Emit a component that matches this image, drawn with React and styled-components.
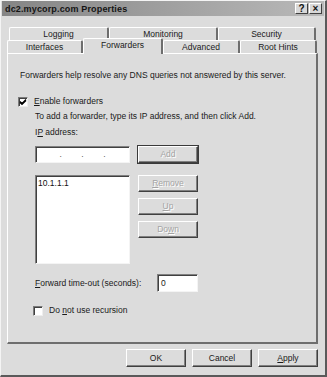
import React from "react";
import styled, { createGlobalStyle } from "styled-components";

const Global = createGlobalStyle`
  html, body {
    margin: 0;
    padding: 0;
    background: #dcdcdc;
  }
  * {
    box-sizing: border-box;
  }
`;

const row1 = [
  { label: "Logging", w: 100 },
  { label: "Monitoring", w: 109 },
  { label: "Security", w: 98 },
];

const row2 = [
  { label: "Interfaces", w: 76 },
  { label: "Forwarders", w: 80, active: true },
  { label: "Advanced", w: 77 },
  { label: "Root Hints", w: 77 },
];

const App = () => {
  return (
    <>
      <Global />
      <Window>
        <TitleBar>
          <Title>dc2.mycorp.com Properties</Title>
          <CaptionButtons>
            <CaptionButton>?</CaptionButton>
            <CaptionButton>×</CaptionButton>
          </CaptionButtons>
        </TitleBar>
        <Body>
          <TabStrip>
            <TabRow $indent={2}>
              {row1.map((t) => (
                <Tab key={t.label} $w={t.w}>
                  {t.label}
                </Tab>
              ))}
            </TabRow>
            <TabRow $indent={0}>
              {row2.map((t) => (
                <Tab key={t.label} $w={t.w} $active={t.active}>
                  {t.label}
                </Tab>
              ))}
            </TabRow>
          </TabStrip>
          <Panel>
            <Text>
              Forwarders help resolve any DNS queries not answered by this
              server.
            </Text>
            <CheckRow $top={15}>
              <Check>
                <svg width="8" height="8" viewBox="0 0 8 8">
                  <path
                    d="M1 3.5 L3 5.5 L7 1.5 M1 4.5 L3 6.5 L7 2.5"
                    stroke="#000"
                    strokeWidth="1.2"
                    fill="none"
                  />
                </svg>
              </Check>
              <span>
                <U>E</U>nable forwarders
              </span>
            </CheckRow>
            <Group>
              <Text $top={4}>
                To add a forwarder, type its IP address, and then click Add.
              </Text>
              <Text $top={5}>
                I<U>P</U> address:
              </Text>
              <FieldRow $top={8}>
                <IpField>
                  <IpSeg />
                  <IpDot>.</IpDot>
                  <IpSeg />
                  <IpDot>.</IpDot>
                  <IpSeg />
                  <IpDot>.</IpDot>
                  <IpSeg />
                </IpField>
                <Button $disabled $default>
                  Add
                </Button>
              </FieldRow>
              <FieldRow $top={12}>
                <ListBox>
                  <ListItem>10.1.1.1</ListItem>
                </ListBox>
                <ButtonColumn>
                  <Button $disabled>
                    <U>R</U>emove
                  </Button>
                  <Button $disabled>
                    <U>U</U>p
                  </Button>
                  <Button $disabled>
                    Do<U>w</U>n
                  </Button>
                </ButtonColumn>
              </FieldRow>
              <TimeoutRow>
                <span>
                  <U>F</U>orward time-out (seconds):
                </span>
                <NumberField>0</NumberField>
              </TimeoutRow>
              <CheckRow $top={13}>
                <Check />
                <span>
                  Do <U>n</U>ot use recursion
                </span>
              </CheckRow>
            </Group>
          </Panel>
          <Footer>
            <Button>OK</Button>
            <Button>Cancel</Button>
            <Button>
              <U>A</U>pply
            </Button>
          </Footer>
        </Body>
      </Window>
    </>
  );
};

export default App;

const Window = styled.div`
  width: 327px;
  height: 377px;
  display: flex;
  flex-direction: column;
  background: #dcdcdc;
  border-left: 1px solid #f4f4f4;
  border-top: 1px solid #f4f4f4;
  border-right: 2px solid #5a5a5a;
  border-bottom: 2px solid #5a5a5a;
  font-family: "Liberation Sans", Arial, sans-serif;
  font-size: 8.5px;
  color: #1a1a1a;
`;

const TitleBar = styled.div`
  height: 15px;
  margin: 0 1px;
  display: flex;
  align-items: center;
  justify-content: space-between;
  padding: 0 2px 0 3px;
  background: linear-gradient(to right, #858585, #b9b9b9);
`;

const Title = styled.div`
  font-weight: bold;
  font-size: 9px;
  color: #141414;
  letter-spacing: 0.15px;
`;

const CaptionButtons = styled.div`
  display: flex;
  gap: 1px;
`;

const CaptionButton = styled.div`
  width: 13px;
  height: 11px;
  display: flex;
  align-items: center;
  justify-content: center;
  background: #d8d8d8;
  border-top: 1px solid #fff;
  border-left: 1px solid #fff;
  border-right: 1px solid #404040;
  border-bottom: 1px solid #404040;
  font-weight: bold;
  font-size: 10px;
  line-height: 1;
  color: #111;
`;

const Body = styled.div`
  flex: 1;
  display: flex;
  flex-direction: column;
  padding: 10px 7px 0 6px;
`;

const TabStrip = styled.div`
  display: flex;
  flex-direction: column;
`;

const TabRow = styled.div`
  display: flex;
  align-items: flex-end;
  height: ${(p) => (p.$indent ? 14 : 13)}px;
  padding-left: ${(p) => p.$indent}px;
`;

const Tab = styled.div`
  position: relative;
  width: ${(p) => p.$w}px;
  height: ${(p) => (p.$active ? 16 : 13)}px;
  margin-bottom: ${(p) => (p.$active ? -1 : 0)}px;
  z-index: ${(p) => (p.$active ? 2 : 1)};
  display: flex;
  align-items: center;
  justify-content: center;
  padding-bottom: ${(p) => (p.$active ? 3 : 0)}px;
  background: #dcdcdc;
  border-top: 1px solid #fff;
  border-left: 1px solid #fff;
  border-right: 2px solid #6e6e6e;
  border-top-left-radius: 2px;
  border-top-right-radius: 2px;
  color: #1a1a1a;
`;

const Panel = styled.div`
  height: 291px;
  display: flex;
  flex-direction: column;
  padding: 16px 12px 0 12px;
  background: #dcdcdc;
  border-top: 1px solid #fff;
  border-left: 1px solid #fff;
  border-right: 2px solid #6e6e6e;
  border-bottom: 2px solid #6e6e6e;
`;

const Text = styled.div`
  line-height: 11px;
  margin-top: ${(p) => p.$top || 0}px;
  white-space: nowrap;
`;

const U = styled.span`
  text-decoration: underline;
`;

const CheckRow = styled.div`
  display: flex;
  align-items: center;
  gap: 6px;
  line-height: 11px;
  margin-top: ${(p) => p.$top}px;
`;

const Check = styled.div`
  width: 10px;
  height: 10px;
  display: flex;
  align-items: center;
  justify-content: center;
  margin-left: -2px;
  background: #fff;
  border-top: 1px solid #7a7a7a;
  border-left: 1px solid #7a7a7a;
  border-right: 1px solid #eee;
  border-bottom: 1px solid #eee;
  box-shadow: inset 1px 1px 0 #404040;
`;

const Group = styled.div`
  display: flex;
  flex-direction: column;
  padding-left: 15px;
`;

const FieldRow = styled.div`
  display: flex;
  align-items: flex-start;
  gap: 8px;
  margin-top: ${(p) => p.$top}px;
`;

const sunken = `
  background: #fff;
  border-top: 1px solid #808080;
  border-left: 1px solid #808080;
  border-right: 1px solid #f4f4f4;
  border-bottom: 1px solid #f4f4f4;
  box-shadow: inset 1px 1px 0 #404040;
`;

const IpField = styled.div`
  width: 95px;
  height: 17px;
  display: flex;
  align-items: center;
  padding: 0 4px;
  ${sunken}
`;

const IpSeg = styled.span`
  flex: 1;
`;

const IpDot = styled.span`
  color: #555;
  line-height: 1;
`;

const Button = styled.div`
  width: 60px;
  height: 17px;
  display: flex;
  align-items: center;
  justify-content: center;
  background: #dcdcdc;
  border-top: 1px solid #fff;
  border-left: 1px solid #fff;
  border-right: 1px solid #404040;
  border-bottom: 1px solid #404040;
  box-shadow: ${(p) =>
    p.$default
      ? "0 0 0 1px #3a3a3a, inset -1px -1px 0 #808080"
      : "inset -1px -1px 0 #808080"};
  color: ${(p) => (p.$disabled ? "#a4a4a4" : "#1a1a1a")};
  text-shadow: ${(p) => (p.$disabled ? "1px 1px 0 #fff" : "none")};
  line-height: 1;
`;

const ListBox = styled.div`
  width: 95px;
  height: 89px;
  padding: 2px;
  ${sunken}
`;

const ListItem = styled.div`
  line-height: 11px;
  color: #111;
`;

const ButtonColumn = styled.div`
  display: flex;
  flex-direction: column;
  gap: 6px;
`;

const TimeoutRow = styled.div`
  display: flex;
  align-items: center;
  justify-content: space-between;
  width: 163px;
  margin-top: 10px;
  line-height: 11px;
`;

const NumberField = styled.div`
  width: 41px;
  height: 18px;
  display: flex;
  align-items: center;
  padding-left: 3px;
  ${sunken}
`;

const Footer = styled.div`
  display: flex;
  justify-content: flex-end;
  gap: 6px;
  margin-top: 5px;

  & > div {
    height: 18px;
  }
`;
